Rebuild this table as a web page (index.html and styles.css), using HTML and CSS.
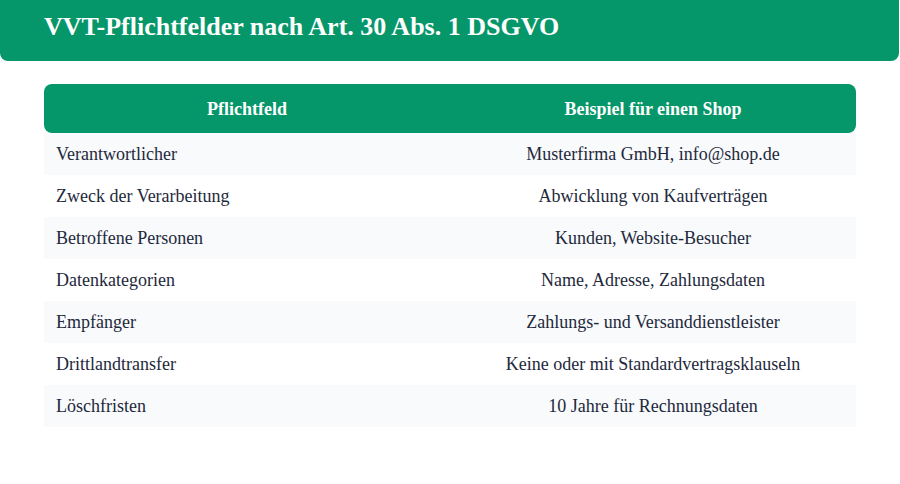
FILE: index.html
```html
<!DOCTYPE html>
<html lang="de">
<head>
<meta charset="utf-8">
<title>VVT-Pflichtfelder</title>
<link rel="stylesheet" href="styles.css">
</head>
<body>
<header class="banner">
  <h1 class="banner-title">VVT-Pflichtfelder nach Art. 30 Abs. 1 DSGVO</h1>
</header>
<main class="content">
  <table class="vvt">
    <thead>
      <tr>
        <th>Pflichtfeld</th>
        <th>Beispiel für einen Shop</th>
      </tr>
    </thead>
    <tbody>
      <tr><td>Verantwortlicher</td><td>Musterfirma GmbH, info@shop.de</td></tr>
      <tr><td>Zweck der Verarbeitung</td><td>Abwicklung von Kaufverträgen</td></tr>
      <tr><td>Betroffene Personen</td><td>Kunden, Website-Besucher</td></tr>
      <tr><td>Datenkategorien</td><td>Name, Adresse, Zahlungsdaten</td></tr>
      <tr><td>Empfänger</td><td>Zahlungs- und Versanddienstleister</td></tr>
      <tr><td>Drittlandtransfer</td><td>Keine oder mit Standardvertragsklauseln</td></tr>
      <tr><td>Löschfristen</td><td>10 Jahre für Rechnungsdaten</td></tr>
    </tbody>
  </table>
</main>
</body>
</html>
```
FILE: styles.css
```css
html, body {
  margin: 0;
  padding: 0;
  background: #ffffff;
}
body {
  font-family: "Liberation Serif", "Times New Roman", serif;
  color: #1e293b;
}
.banner {
  background: #059669;
  border-radius: 0 0 8px 8px;
  height: 61px;
  width: 899px;
  box-sizing: border-box;
  padding: 14px 44px 0 44px;
}
.banner-title {
  margin: 0;
  color: #ffffff;
  font-size: 26px;
  font-weight: bold;
  line-height: 26px;
}
.content {
  padding: 23px 44px 0 44px;
}
.vvt {
  width: 812px;
  border-collapse: separate;
  border-spacing: 0;
  table-layout: fixed;
}
.vvt th {
  background: #059669;
  color: #ffffff;
  font-size: 18px;
  font-weight: bold;
  height: 49px;
  padding: 2px 12px 0 12px;
  box-sizing: border-box;
  text-align: center;
  vertical-align: middle;
}
.vvt th:first-child {
  border-radius: 8px 0 0 8px;
}
.vvt th:last-child {
  border-radius: 0 8px 8px 0;
}
.vvt td {
  font-size: 18px;
  height: 42px;
  padding: 1px 12px 0 12px;
  box-sizing: border-box;
  vertical-align: middle;
}
.vvt td:first-child {
  text-align: left;
}
.vvt td:last-child {
  text-align: center;
}
.vvt tbody tr:nth-child(odd) td {
  background: #f8fafc;
}
```
